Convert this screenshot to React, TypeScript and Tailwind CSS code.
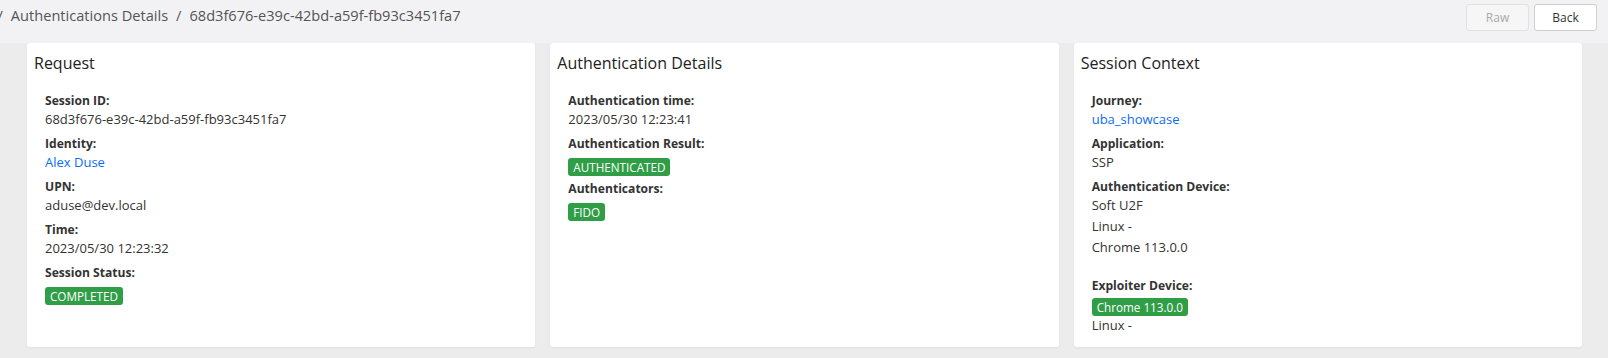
import type { ReactNode } from 'react'

const font = { fontFamily: '"Open Sans", "Noto Sans", sans-serif' }

function Label({ children }: { children: ReactNode }) {
  return <div className="text-[12.1px] font-bold leading-[18px] text-[#333]">{children}</div>
}

function Value({ children, className = '' }: { children: ReactNode; className?: string }) {
  return <div className={`text-[13px] leading-[18px] text-[#333] ${className}`}>{children}</div>
}

function Badge({ children }: { children: ReactNode }) {
  return (
    <span className="inline-block h-[18px] rounded-[3px] bg-[#2f9e47] px-[5px] text-[11.7px] leading-[18px] text-white">
      {children}
    </span>
  )
}

function Card({ title, children }: { title: string; children: ReactNode }) {
  return (
    <div className="h-[304px] rounded-[3px] bg-white shadow-[0_1px_3px_rgba(0,0,0,0.05)]">
      <div className="px-[7px] pt-2 text-[16px] leading-6 text-[#222]">{title}</div>
      <div className="pl-[18px] pt-[17px]">{children}</div>
    </div>
  )
}

export default function App() {
  return (
    <div style={font} className="h-[358px] w-[1608px] overflow-hidden bg-[#f2f2f4]">
      {/* Header */}
      <div className="flex h-[43px] items-start justify-between">
        <div className="flex pt-[5px] text-[14.6px] leading-5 text-[#555]">
          <span className="ml-[-2.5px] pr-2">/</span>
          <span>Authentications Details</span>
          <span className="px-2">/</span>
          <span>68d3f676-e39c-42bd-a59f-fb93c3451fa7</span>
        </div>
        <div className="mr-[11px] mt-[4px] flex gap-[5px]">
          <button
            disabled
            className="h-[27px] w-[63px] rounded-[3px] border border-[#e2e2e2] bg-[#f6f6f6] text-[12px] text-[#aaa]"
          >
            Raw
          </button>
          <button className="h-[27px] w-[63px] rounded-[3px] border border-[#cfcfcf] bg-white text-[12px] text-[#333]">
            Back
          </button>
        </div>
      </div>

      {/* Cards */}
      <div className="h-[315px] bg-[#ececed] pl-[27px] pr-[26px]">
        <div className="grid grid-cols-3 gap-[15px]">
          <Card title="Request">
            <div className="mb-[7px]">
              <Label>Session ID:</Label>
              <Value>68d3f676-e39c-42bd-a59f-fb93c3451fa7</Value>
            </div>
            <div className="mb-[7px]">
              <Label>Identity:</Label>
              <Value className="!text-[#0a6cf5]">Alex Duse</Value>
            </div>
            <div className="mb-[7px]">
              <Label>UPN:</Label>
              <Value>aduse@dev.local</Value>
            </div>
            <div className="mb-[7px]">
              <Label>Time:</Label>
              <Value>2023/05/30 12:23:32</Value>
            </div>
            <div>
              <Label>Session Status:</Label>
              <div className="mt-[5px] flex">
                <Badge>COMPLETED</Badge>
              </div>
            </div>
          </Card>

          <Card title="Authentication Details">
            <div className="mb-[7px]">
              <Label>Authentication time:</Label>
              <Value>2023/05/30 12:23:41</Value>
            </div>
            <div className="mb-[4px]">
              <Label>Authentication Result:</Label>
              <div className="mt-[5px] flex">
                <Badge>AUTHENTICATED</Badge>
              </div>
            </div>
            <div>
              <Label>Authenticators:</Label>
              <div className="mt-[5px] flex">
                <Badge>FIDO</Badge>
              </div>
            </div>
          </Card>

          <Card title="Session Context">
            <div className="mb-[7px]">
              <Label>Journey:</Label>
              <Value className="!text-[#0a6cf5]">uba_showcase</Value>
            </div>
            <div className="mb-[7px]">
              <Label>Application:</Label>
              <Value>SSP</Value>
            </div>
            <div className="mb-[21px]">
              <Label>Authentication Device:</Label>
              <Value>Soft U2F</Value>
              <Value className="mt-[3px]">Linux -</Value>
              <Value className="mt-[3px]">Chrome 113.0.0</Value>
            </div>
            <div>
              <Label>Exploiter Device:</Label>
              <div className="mt-[3px] flex">
                <Badge>Chrome 113.0.0</Badge>
              </div>
              <Value>Linux -</Value>
            </div>
          </Card>
        </div>
      </div>
    </div>
  )
}
